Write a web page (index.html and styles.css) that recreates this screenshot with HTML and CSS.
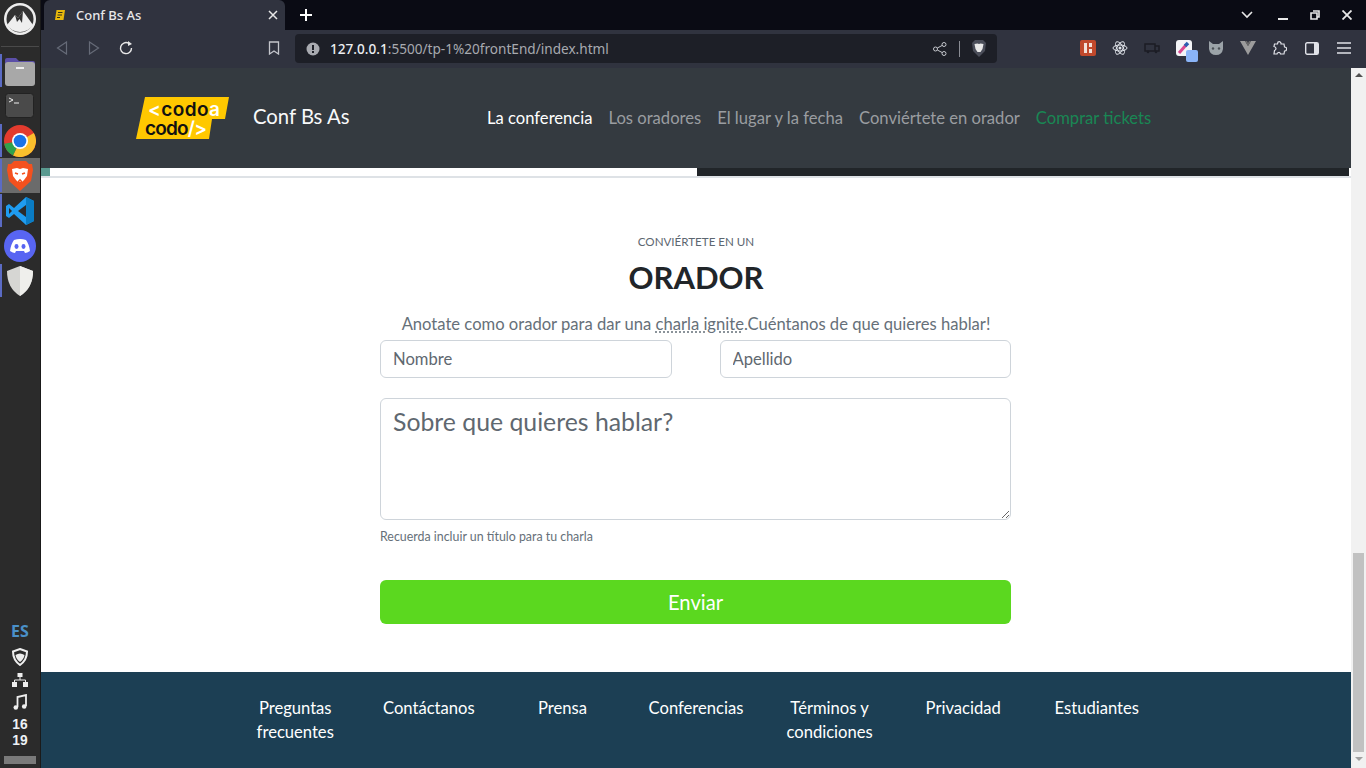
FILE: index.html
```html
<!DOCTYPE html>
<html lang="es">
<head>
	<meta charset="utf-8">
	<title>Conf Bs As</title>
	<link rel="stylesheet" href="styles.css">
</head>
<body>
<div class="desktop">
	<!-- left dock -->
	<aside class="dock">
		<div class="dock-top">
			<svg width="34" height="34" viewBox="0 0 34 34"><circle cx="17" cy="17" r="16" fill="#eee"/><circle cx="17" cy="17" r="13.500" fill="#333"/><path d="M4 23 L12 13 L15 16 L20 9 L30 23 Q25 30 17 30 Q9 30 4 23Z" fill="#eee"/><path d="M12 13 L14 20 L16.500 17 L19 21 L20 9 L15 16Z" fill="#333"/></svg>
		</div>
		<div class="dock-sep"></div>
		<div class="dock-item is-open">
			<svg width="32" height="32" viewBox="0 0 32 32"><path d="M1 5 Q1 3 3 3 H12 L15 6 H29 Q31 6 31 8 V14 H1Z" fill="#5b4fa8"/><rect x="1" y="7" width="30" height="24" rx="3" fill="#a8a8a8"/><rect x="12" y="12" width="8" height="2" fill="#eee"/></svg>
		</div>
		<div class="dock-item">
			<svg width="30" height="26" viewBox="0 0 30 26"><rect x=".5" y=".5" width="28" height="24" rx="3" fill="#4a4a4a" stroke="#222"/><path d="M4 5 L8 7 L4 9" fill="none" stroke="#eee"/><path d="M9 10 H14" stroke="#eee"/></svg>
		</div>
		<div class="dock-item is-open">
			<svg width="32" height="32" viewBox="0 0 32 32"><circle cx="16" cy="16" r="16" fill="#e33b2e"/><path d="M16 16 L29.860 8 A16 16 0 0 1 9 30.400Z" fill="#fbc02d"/><path d="M16 16 L9 30.400 A16 16 0 0 1 .24 18.800Z" fill="#2fa24d"/><circle cx="16" cy="16" r="8" fill="#fff"/><circle cx="16" cy="16" r="6.300" fill="#1a73e8"/></svg>
		</div>
		<div class="dock-item is-open is-active">
			<svg width="26" height="30" viewBox="0 0 26 30"><path d="M7 0 H19 L22 3 L25 3 L26 9 L24 20 L13 30 L2 20 L0 9 L1 3 L4 3Z" fill="#f4511e"/><path d="M5 8 L10 7 L13 8 L16 7 L21 8 L20 15 L17 19 L15 21 H11 L9 19 L6 15Z" fill="#fff"/><path d="M8 12 L11 13 M18 12 L15 13 M11 21 L13 19 L15 21" stroke="#f4511e" stroke-width="1.600" fill="none"/></svg>
		</div>
		<div class="dock-item is-open">
			<svg width="28" height="28" viewBox="0 0 28 28"><path d="M20 0 L28 4 V24 L20 28 L8 17 L3 21 L0 19 V9 L3 7 L8 11Z" fill="#1f9cf0"/><path d="M20 0 L28 4 V24 L20 28Z" fill="#0a7cc4"/><path d="M20 8 L12 14 L20 20Z" fill="#2b2b2b"/><path d="M3 11 L6 14 L3 17Z" fill="#2b2b2b"/></svg>
		</div>
		<div class="dock-item">
			<svg width="32" height="32" viewBox="0 0 32 32"><circle cx="16" cy="16" r="16" fill="#5865f2"/><path d="M10 10 Q13 9 16 9 Q19 9 22 10 Q25 14 26 21 Q23 23 21 23 L20 21 H12 L11 23 Q9 23 6 21 Q7 14 10 10Z" fill="#fff"/><ellipse cx="12.500" cy="16.500" rx="2" ry="2.400" fill="#5865f2"/><ellipse cx="19.500" cy="16.500" rx="2" ry="2.400" fill="#5865f2"/></svg>
		</div>
		<div class="dock-item is-open">
			<svg width="26" height="30" viewBox="0 0 26 30"><path d="M13 0 L26 5 Q26 22 13 30 Q0 22 0 5Z" fill="#d6d6d3"/><path d="M13 0 L26 5 Q26 22 13 30Z" fill="#efefec"/></svg>
		</div>
		<div class="dock-tray">
			<span class="tray-lang">ES</span>
			<svg width="16" height="18" viewBox="0 0 16 18"><path d="M8 1 L15 3.500 Q15 12 8 17 Q1 12 1 3.500Z" fill="none" stroke="#eee" stroke-width="2"/><path d="M3.500 7 Q8 4 12.500 7 Q12 11 8 14 Q4 11 3.500 7Z" fill="#eee"/></svg>
			<svg width="16" height="14" viewBox="0 0 16 14"><rect x="5.500" y="0" width="5" height="4" fill="#eee"/><rect x="0" y="9" width="5" height="5" fill="#eee"/><rect x="11" y="9" width="5" height="5" fill="#eee"/><path d="M8 4 V7 M2.500 9 V7 H13.500 V9" stroke="#eee" fill="none"/></svg>
			<svg width="14" height="16" viewBox="0 0 14 16"><path d="M4.500 13 V3 L13 1 V12" fill="none" stroke="#eee" stroke-width="1.800"/><circle cx="2.800" cy="13.500" r="2.300" fill="#eee"/><circle cx="11.200" cy="12.500" r="2.300" fill="#eee"/></svg>
			<div class="tray-clock">16<br>19</div>
			<div class="tray-bar"></div>
		</div>
	</aside>

	<div class="browser">
		<!-- tab strip -->
		<div class="tabstrip">
			<div class="tab">
				<svg width="12" height="12" viewBox="0 0 12 12"><path d="M2.500 1 H11 L9.500 11 H1Z" fill="#e8b90c"/><path d="M4 3.500 H8.500 M3.500 6 H8 M3 8.500 H6" stroke="#33301a" stroke-width="1"/></svg>
				<span class="tab-title">Conf Bs As</span>
				<svg width="10" height="10" viewBox="0 0 10 10"><path d="M1 1 L9 9 M9 1 L1 9" stroke="#e8e8e8" stroke-width="1.500"/></svg>
			</div>
			<svg class="tab-new" width="14" height="14" viewBox="0 0 14 14"><path d="M7 1 V13 M1 7 H13" stroke="#fff" stroke-width="2"/></svg>
			<div class="window-btns">
				<svg class="tab-list" width="14" height="10" viewBox="0 0 14 10"><path d="M2 2 L7 7 L12 2" fill="none" stroke="#e8e8e8" stroke-width="1.600"/></svg>
				<svg width="10" height="10" viewBox="0 0 10 10"><path d="M0 9 H10" stroke="#e8e8e8" stroke-width="2"/></svg>
				<svg width="10" height="10" viewBox="0 0 10 10"><path d="M3 1 H9 V7 H7 M1 3 H7 V9 H1Z" fill="none" stroke="#e8e8e8" stroke-width="1.600"/></svg>
				<svg width="10" height="10" viewBox="0 0 10 10"><path d="M.5 .5 L9.500 9.500 M9.500 .5 L.5 9.500" stroke="#e8e8e8" stroke-width="1.800"/></svg>
			</div>
		</div>
		<!-- toolbar -->
		<div class="toolbar">
			<div class="nav-btns">
				<svg width="12" height="14" viewBox="0 0 12 14"><path d="M10.500 1 V13 L1.500 7Z" fill="none" stroke="#666b78" stroke-width="1.200"/></svg>
				<svg width="12" height="14" viewBox="0 0 12 14"><path d="M1.500 1 V13 L10.500 7Z" fill="none" stroke="#666b78" stroke-width="1.200"/></svg>
				<svg class="reload" width="14" height="14" viewBox="0 0 14 14"><path d="M12.500 7 A5.500 5.500 0 1 1 9.500 2.200" fill="none" stroke="#e8e8e8" stroke-width="1.400"/><path d="M9 0 L13 3 L9 5Z" fill="#e8e8e8"/></svg>
			</div>
			<svg class="bookmark" width="12" height="14" viewBox="0 0 12 14"><path d="M1.500 1 H10.500 V13 L6 10 L1.500 13Z" fill="none" stroke="#c4c6cc" stroke-width="1.300"/></svg>
			<div class="urlbar">
				<svg width="14" height="14" viewBox="0 0 14 14"><circle cx="7" cy="7" r="6.500" fill="#a8aab0"/><rect x="6" y="3" width="2" height="5" fill="#1d1f27"/><rect x="6" y="9" width="2" height="2" fill="#1d1f27"/></svg>
				<span class="url"><b>127.0.0.1</b>:5500/tp-1%20frontEnd/index.html</span>
				<svg width="14" height="14" viewBox="0 0 14 14"><circle cx="11" cy="2.500" r="2" fill="none" stroke="#c4c6cc"/><circle cx="11" cy="11.500" r="2" fill="none" stroke="#c4c6cc"/><circle cx="2.500" cy="7" r="2" fill="none" stroke="#c4c6cc"/><path d="M4.300 6 L9.300 3.400 M4.300 8 L9.300 10.600" stroke="#c4c6cc"/></svg>
				<span class="url-sep"></span>
				<svg width="16" height="17" viewBox="0 0 16 17"><path d="M4 0 H12 L15 3 L14 11 L8 17 L2 11 L1 3Z" fill="#4a4d59"/><path d="M3.500 4 L6.500 3.500 L8 4 L9.500 3.500 L12.500 4 L11.500 9 L9.500 12 H6.500 L4.500 9Z" fill="#e8e8e8"/></svg>
			</div>
			<div class="ext-icons">
				<svg width="16" height="16" viewBox="0 0 16 16"><rect width="16" height="16" rx="2" fill="#c0492c"/><path d="M4 3 H7 V13 H4Z M9 3 H12 V7 H9Z M9 9 H12 V13 H9Z" fill="#f3e0d8"/></svg>
				<svg width="16" height="16" viewBox="0 0 16 16"><g fill="none" stroke="#e0e4ea"><ellipse cx="8" cy="8" rx="7" ry="3"/><ellipse cx="8" cy="8" rx="7" ry="3" transform="rotate(60 8 8)"/><ellipse cx="8" cy="8" rx="7" ry="3" transform="rotate(120 8 8)"/></g><circle cx="8" cy="8" r="1.500" fill="#e0e4ea"/></svg>
				<svg width="16" height="12" viewBox="0 0 16 12"><path d="M1 2 H11 V9 H1Z M11 4 H15 V9 H11Z" fill="none" stroke="#1b1d25" stroke-width="1.500"/><circle cx="4" cy="10" r="1.300" fill="#1b1d25"/><circle cx="12" cy="10" r="1.300" fill="#1b1d25"/></svg>
				<svg class="ext-picker" width="22" height="22" viewBox="0 0 22 22"><rect width="16" height="16" rx="3" fill="#f3f4f6"/><path d="M3 13 L10 5" stroke="#d9478f" stroke-width="3"/><path d="M9 6 L12 3" stroke="#2b5fb0" stroke-width="3.500"/><rect x="10" y="10" width="12" height="12" rx="2" fill="#8ab4f8"/></svg>
				<svg width="16" height="14" viewBox="0 0 16 14"><path d="M1 0 L5 3 H11 L15 0 V8 Q14 14 8 14 Q2 14 1 8Z" fill="#9ba3a8"/><circle cx="5" cy="7.500" r="1.200" fill="#4a5055"/><circle cx="11" cy="7.500" r="1.200" fill="#4a5055"/></svg>
				<svg width="16" height="14" viewBox="0 0 16 14"><path d="M0 0 H5 L8 5 L11 0 H16 L8 14Z" fill="#9c9c9c"/><path d="M5 0 L8 5 L11 0 H9 L8 2 L7 0Z" fill="#6a6a6a"/></svg>
				<svg width="14" height="14" viewBox="0 0 14 14"><path d="M5 1 Q7 0 8 2 V3 H11 L11.500 6 Q14 6 13.500 8.500 Q13.500 10 11.500 10 L11 13 H7.500 Q7 11 5.500 11.500 Q4 12 4 13 H1 L1.500 9.500 Q3 9 3 7.500 Q3 6 1 5.500 L1.500 3 H4.500Z" fill="none" stroke="#e0e2e8" stroke-width="1.200"/></svg>
				<svg width="14" height="13" viewBox="0 0 14 13"><rect x=".7" y=".7" width="12.600" height="11.600" rx="1.500" fill="none" stroke="#e0e2e8" stroke-width="1.400"/><rect x="9" y="1" width="4" height="11" fill="#e0e2e8"/></svg>
				<svg width="14" height="12" viewBox="0 0 14 12"><path d="M0 1 H14 M0 6 H14 M0 11 H14" stroke="#e0e2e8" stroke-width="1.300"/></svg>
			</div>
		</div>
		<!-- page + scrollbar -->
		<div class="viewport">
			<div class="page">
				<header class="site-header">
					<div class="brand">
						<svg class="logo" width="93" height="42" viewBox="0 0 93 42">
							<path d="M9 0 H93 L89 22 H76 L73 42 H0Z" fill="#ffc800"/>
							<text x="12" y="19" textLength="72" class="logo-text"><tspan fill="#fff">&lt;</tspan>codo<tspan fill="#fff">a</tspan></text>
							<text x="9" y="38" textLength="62" class="logo-text">codo<tspan fill="#fff">/&gt;</tspan></text>
						</svg>
						<span class="brand-name">Conf Bs As</span>
					</div>
					<nav class="site-nav">
						<a class="is-current" href="#">La conferencia</a>
						<a href="#">Los oradores</a>
						<a href="#">El lugar y la fecha</a>
						<a href="#">Conviértete en orador</a>
						<a class="nav-buy" href="#">Comprar tickets</a>
					</nav>
				</header>
				<div class="strip">
					<div class="strip-left"><span class="strip-corner"></span></div>
					<div class="strip-right"></div>
				</div>
				<main class="speaker">
					<p class="speaker-kicker">CONVIÉRTETE EN UN</p>
					<h1 class="speaker-title">ORADOR</h1>
					<p class="speaker-lead">Anotate como orador para dar una <abbr title="charla ignite">charla ignite</abbr>.Cuéntanos de que quieres hablar!</p>
					<form class="speaker-form">
						<div class="name-row">
							<input class="field" type="text" placeholder="Nombre">
							<input class="field" type="text" placeholder="Apellido">
						</div>
						<textarea class="field field-topic" placeholder="Sobre que quieres hablar?"></textarea>
						<small class="hint">Recuerda incluir un título para tu charla</small>
						<button class="send" type="button">Enviar</button>
					</form>
				</main>
				<footer class="site-footer">
					<a href="#">Preguntas frecuentes</a>
					<a href="#">Contáctanos</a>
					<a href="#">Prensa</a>
					<a href="#">Conferencias</a>
					<a href="#">Términos y condiciones</a>
					<a href="#">Privacidad</a>
					<a href="#">Estudiantes</a>
				</footer>
			</div>
			<div class="scrollbar">
				<span class="scroll-up"></span>
				<span class="scroll-thumb"></span>
				<span class="scroll-down"></span>
			</div>
		</div>
	</div>
</div>
</body>
</html>
```

FILE: styles.css
```css
* {
	box-sizing: border-box;
}

html, body {
	margin: 0;
	height: 100%;
	overflow: hidden;
}

body {
	font-family: "Lato", "Noto Sans", sans-serif;
	font-size: 16.6px;
	color: #212529;
}

.desktop {
	display: flex;
	width: 1366px;
	height: 768px;
}

/* dock */
.dock {
	width: 41px;
	flex: none;
	display: flex;
	flex-direction: column;
	align-items: center;
	background: #2b2b2b;
	border-right: 1px solid #1a1a1a;
}

.dock-top {
	height: 46px;
	padding-top: 2px;
}

.dock-sep {
	width: 38px;
	height: 1px;
	background: #4a4a4a;
	margin-bottom: 6px;
}

.dock-item {
	position: relative;
	width: 40px;
	height: 35px;
	display: flex;
	align-items: center;
	justify-content: center;
}

.dock-item.is-open::before {
	content: "";
	position: absolute;
	left: 0;
	top: 1px;
	bottom: 1px;
	width: 2px;
	background: #5b6bc4;
}

.dock-item.is-active {
	background: #6b6b6b;
}

.dock-tray {
	margin-top: auto;
	display: flex;
	flex-direction: column;
	align-items: center;
	gap: 7px;
	padding-bottom: 4px;
	width: 100%;
}

.tray-lang {
	font: bold 16px/16px "Noto Sans", sans-serif;
	color: #4a90c8;
	margin-bottom: 2px;
}

.tray-clock {
	font: bold 13.8px/16px "Liberation Sans", sans-serif;
	color: #eef2f6;
	text-align: center;
}

.tray-bar {
	width: 32px;
	height: 8px;
	background: #7a7a7a;
}

/* browser chrome */
.browser {
	flex: 1;
	min-width: 0;
	display: flex;
	flex-direction: column;
}

.tabstrip {
	height: 30px;
	flex: none;
	display: flex;
	align-items: center;
	background: #0a0b14;
	padding-left: 3px;
}

.tab {
	width: 241px;
	height: 30px;
	display: flex;
	align-items: center;
	gap: 10px;
	padding: 0 7px 0 10px;
	background: #30333f;
	border-radius: 6px 6px 0 0;
}

.tab-title {
	flex: 1;
	font: 500 13px "Noto Sans", sans-serif;
	color: #e8e8ea;
}

.tab-new {
	margin-left: 14px;
}

.window-btns {
	margin-left: auto;
	display: flex;
	align-items: center;
	gap: 22px;
	padding-right: 14px;
}

.tab-list {
	margin-right: 2px;
}

.toolbar {
	height: 38px;
	flex: none;
	display: flex;
	align-items: center;
	background: #30333f;
	padding-bottom: 2px;
}

.nav-btns {
	display: flex;
	align-items: center;
	gap: 20px;
	padding-left: 15px;
	width: 227px;
}

.reload {
	margin-left: -1px;
}

.bookmark {
	margin-right: 15px;
}

.urlbar {
	width: 702px;
	height: 29px;
	margin-top: 1px;
	display: flex;
	align-items: center;
	padding: 0 10px 0 11px;
	gap: 10px;
	background: #1d1f27;
	border-radius: 4px;
}

.url {
	flex: 1;
	font: 13.6px "Noto Sans", sans-serif;
	color: #a8aab0;
}

.url b {
	font-weight: 500;
	color: #eceef2;
}

.url-sep {
	width: 1px;
	height: 16px;
	background: #8a8c94;
	margin: 0 1px 0 2px;
}

.ext-icons {
	margin-left: 75px;
	display: grid;
	grid-auto-flow: column;
	grid-auto-columns: 32px;
	align-items: center;
	justify-items: center;
}

.ext-picker {
	justify-self: start;
	margin: 6px 0 0 8px;
}

/* page */
.viewport {
	flex: 1;
	min-height: 0;
	display: flex;
}

.page {
	flex: 1;
	min-width: 0;
	display: flex;
	flex-direction: column;
	background: #fff;
}

.site-header {
	height: 100px;
	flex: none;
	display: flex;
	align-items: center;
	background: #343a40;
	padding-left: 95px;
}

.brand {
	width: 351px;
	display: flex;
	align-items: center;
	gap: 24px;
	margin-top: -4px;
}

.logo {
	display: block;
	margin-top: 4px;
}

.logo-text {
	font: 600 19px "Inter", sans-serif;
	fill: #111;
}

.brand-name {
	font-size: 20.3px;
	color: #f8f9fa;
}

.site-nav {
	display: flex;
	gap: 16px;
}

.site-nav a {
	color: #9a9da1;
	text-decoration: none;
}

.site-nav a.is-current {
	color: #fff;
}

.site-nav a.nav-buy {
	color: #198754;
}

.strip {
	height: 10px;
	flex: none;
	display: flex;
	border-bottom: 2px solid #dee2e6;
}

.strip-left {
	flex: 1;
	background: #fff;
}

.strip-corner {
	display: block;
	width: 9px;
	height: 8px;
	background: #5a9a90;
}

.strip-right {
	width: 652px;
	flex: none;
	background: #212529;
	margin-right: 2px;
}

.speaker {
	flex: 1;
	display: flex;
	flex-direction: column;
	align-items: center;
	padding-top: 55px;
}

.speaker-kicker {
	margin: 0;
	font-size: 11.6px;
	line-height: 18px;
	color: #5c6670;
}

.speaker-title {
	margin: 7px 0 0;
	font-size: 31px;
	line-height: 38px;
	font-weight: 700;
}

.speaker-lead {
	margin: 16px 0 0;
	line-height: 24px;
	color: #667079;
}

.speaker-lead abbr {
	text-decoration: underline dotted;
	text-underline-offset: 2px;
	cursor: help;
}

.speaker-form {
	width: 631px;
	display: flex;
	flex-direction: column;
	margin: 4px 1px 0 0;
}

.name-row {
	display: grid;
	grid-template-columns: 1fr 1fr;
	gap: 48px;
	margin-bottom: 20px;
}

.field {
	display: block;
	width: 100%;
	height: 38px;
	padding: 6px 12px;
	font: inherit;
	color: #212529;
	background: #fff;
	border: 1px solid #ced4da;
	border-radius: 6px;
}

.field::placeholder {
	color: #5f6870;
	opacity: 1;
}

.field-topic {
	height: 122px;
	padding-top: 5px;
	font-size: 24.8px;
	line-height: 36px;
}

.hint {
	margin-top: 8px;
	font-size: 12.4px;
	line-height: 18px;
	color: #667079;
}

.send {
	height: 44px;
	margin-top: 34px;
	padding-bottom: 2px;
	font: inherit;
	font-size: 20.2px;
	color: #fff;
	background: #5bd81f;
	border: 0;
	border-radius: 6px;
}

.site-footer {
	height: 96px;
	flex: none;
	display: grid;
	grid-template-columns: repeat(7, 133.6px);
	justify-content: center;
	padding-top: 24px;
	background: #1c3f54;
}

.site-footer a {
	padding: 0 12px;
	color: #fff;
	line-height: 24px;
	text-align: center;
	text-decoration: none;
}

/* scrollbar */
.scrollbar {
	width: 15px;
	flex: none;
	display: flex;
	flex-direction: column;
	align-items: center;
	background: #f1f1f1;
}

.scroll-up {
	margin-top: 5px;
	border: 4px solid transparent;
	border-top: 0;
	border-bottom: 4px solid #505050;
}

.scroll-thumb {
	width: 11px;
	height: 199px;
	margin-top: 476px;
	background: #c1c1c1;
}

.scroll-down {
	margin-top: 5px;
	border: 4px solid transparent;
	border-bottom: 0;
	border-top: 4px solid #a0a0a0;
}
```
